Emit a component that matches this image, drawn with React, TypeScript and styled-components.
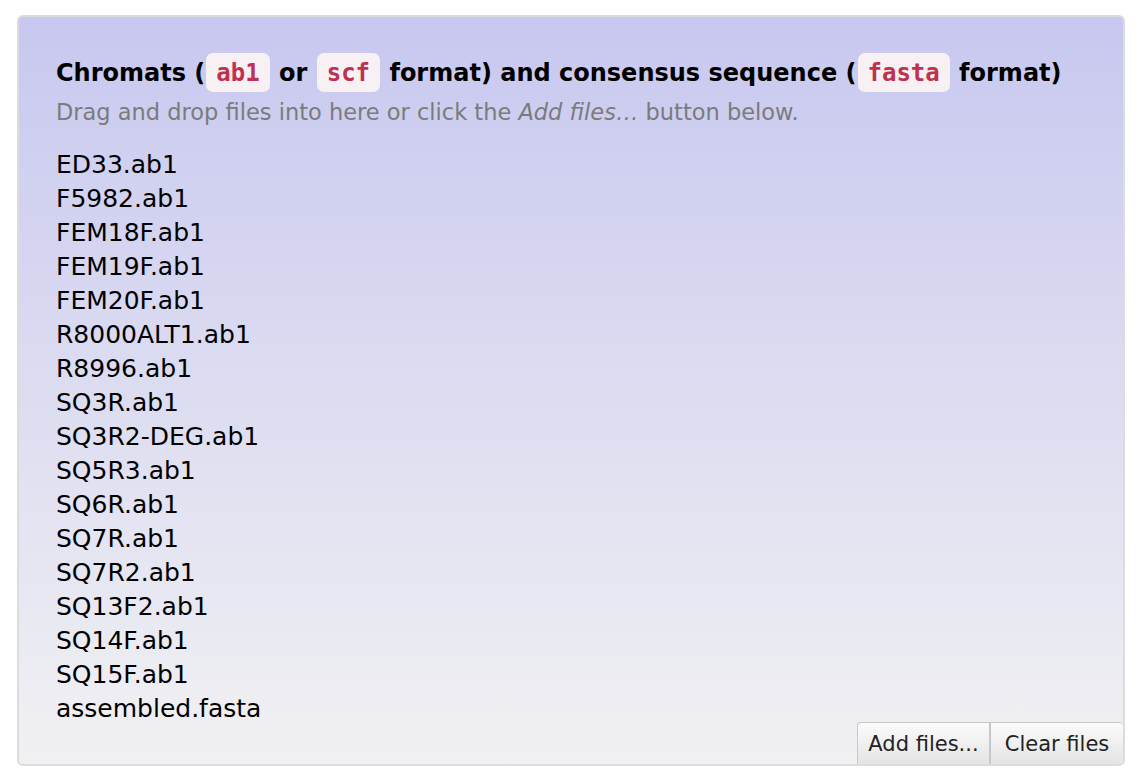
import React from 'react';
import styled, {createGlobalStyle} from 'styled-components';

const files = [
  'ED33.ab1',
  'F5982.ab1',
  'FEM18F.ab1',
  'FEM19F.ab1',
  'FEM20F.ab1',
  'R8000ALT1.ab1',
  'R8996.ab1',
  'SQ3R.ab1',
  'SQ3R2-DEG.ab1',
  'SQ5R3.ab1',
  'SQ6R.ab1',
  'SQ7R.ab1',
  'SQ7R2.ab1',
  'SQ13F2.ab1',
  'SQ14F.ab1',
  'SQ15F.ab1',
  'assembled.fasta',
];

export default function App() {
  return (
    <>
      <GlobalStyle />
      <Page>
        <DropZone>
          <Content>
            <Title>
              Chromats (<Code>ab1</Code> or <Code>scf</Code> format) and consensus sequence (
              <Code>fasta</Code> format)
            </Title>
            <Hint>
              Drag and drop files into here or click the <em>Add files…</em> button below.
            </Hint>
            <FileList>
              {files.map(f => (
                <FileItem key={f}>{f}</FileItem>
              ))}
            </FileList>
          </Content>
          <Actions>
            <Button>Add files...</Button>
            <Button $last>Clear files</Button>
          </Actions>
        </DropZone>
      </Page>
    </>
  );
}

const GlobalStyle = createGlobalStyle`
  body {
    margin: 0;
    background: #fff;
    font-family: "DejaVu Sans", Verdana, sans-serif;
    color: #000;
  }
`;

const Page = styled.div`
  padding: 15px 15px 16px 17px;
`;

const DropZone = styled.div`
  width: 1108px;
  height: 751px;
  box-sizing: border-box;
  border: 2px solid #dcdcdc;
  border-radius: 6px;
  background: linear-gradient(to bottom, #c8c8f0 0%, #f1f1f3 100%);
  display: flex;
  flex-direction: column;
  justify-content: space-between;
`;

const Content = styled.div`
  padding: 35px 0 0 37px;
`;

const Title = styled.h3`
  margin: 0;
  font-size: 24px;
  font-weight: bold;
  line-height: 42px;
  letter-spacing: 0;
  white-space: nowrap;
`;

const Code = styled.code`
  font-family: "DejaVu Sans Mono", Menlo, monospace;
  font-weight: bold;
  font-size: 24px;
  letter-spacing: 0;
  color: #c0304f;
  background: #f8f1f4;
  border-radius: 7px;
  padding: 6px 10px 5px;
  margin: 0 1px;
`;

const Hint = styled.p`
  margin: 4px 0 0;
  font-size: 22.5px;
  line-height: 28px;
  color: #7b7b7b;
`;

const FileList = styled.ul`
  list-style: none;
  margin: 22px 0 0;
  padding: 0;
`;

const FileItem = styled.li`
  font-size: 25px;
  line-height: 34px;
`;

const Actions = styled.div`
  display: flex;
  justify-content: flex-end;
  margin-top: -8px;
`;

const Button = styled.button<{$last?: boolean}>`
  font-family: "DejaVu Sans", Verdana, sans-serif;
  font-size: 21px;
  color: #222;
  width: 133px;
  height: 42px;
  padding: 0;
  border: 1px solid #c8c8c8;
  border-right: ${({$last}) => ($last ? '0' : '1px solid #c8c8c8')};
  border-bottom: 0;
  border-radius: ${({$last}) => ($last ? '0 4px 4px 0' : '4px 0 0 0')};
  background: linear-gradient(to bottom, #fbfbfb, #e4e4e4);
  cursor: pointer;
`;
